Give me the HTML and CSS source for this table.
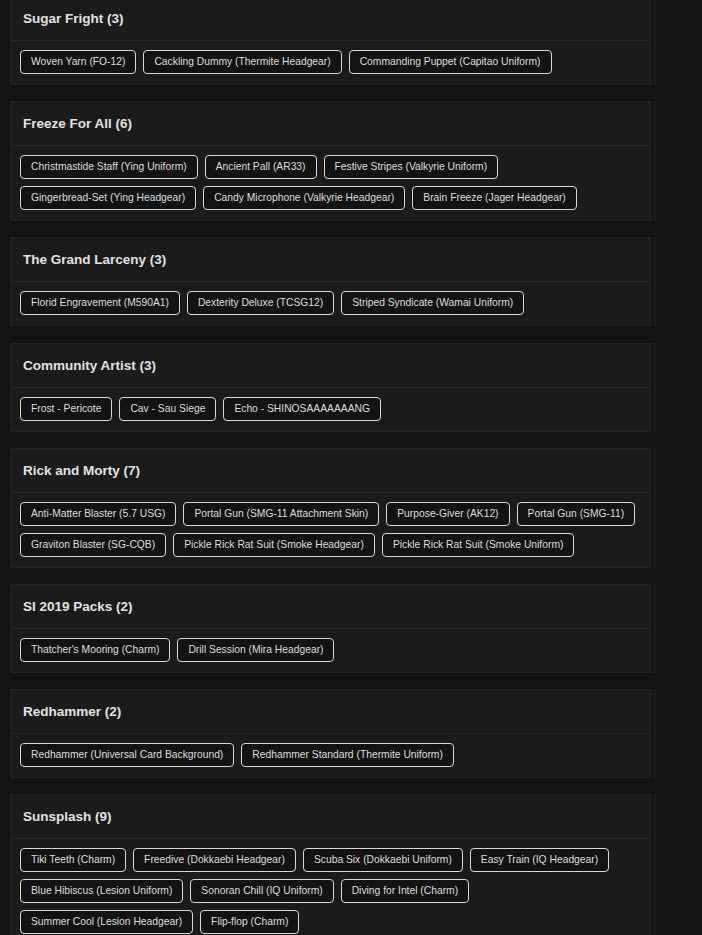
FILE: index.html
```html
<!DOCTYPE html>
<html lang="en">
<head>
    <meta charset="UTF-8">
    <meta name="viewport" content="width=device-width, initial-scale=1.0">
    <title>Bundles</title>
    <link rel="stylesheet" href="styles.css">
</head>
<body>
    <div class="bundles">
        <div class="card">
            <div class="card-header">Sugar Fright (3)</div>
            <div class="card-body">
                <span class="item">Woven Yarn (FO-12)</span>
                <span class="item">Cackling Dummy (Thermite Headgear)</span>
                <span class="item">Commanding Puppet (Capitao Uniform)</span>
            </div>
        </div>
        <div class="card">
            <div class="card-header">Freeze For All (6)</div>
            <div class="card-body">
                <span class="item">Christmastide Staff (Ying Uniform)</span>
                <span class="item">Ancient Pall (AR33)</span>
                <span class="item">Festive Stripes (Valkyrie Uniform)</span>
                <span class="item">Gingerbread-Set (Ying Headgear)</span>
                <span class="item">Candy Microphone (Valkyrie Headgear)</span>
                <span class="item">Brain Freeze (Jager Headgear)</span>
            </div>
        </div>
        <div class="card">
            <div class="card-header">The Grand Larceny (3)</div>
            <div class="card-body">
                <span class="item">Florid Engravement (M590A1)</span>
                <span class="item">Dexterity Deluxe (TCSG12)</span>
                <span class="item">Striped Syndicate (Wamai Uniform)</span>
            </div>
        </div>
        <div class="card">
            <div class="card-header">Community Artist (3)</div>
            <div class="card-body">
                <span class="item">Frost - Pericote</span>
                <span class="item">Cav - Sau Siege</span>
                <span class="item">Echo - SHINOSAAAAAAANG</span>
            </div>
        </div>
        <div class="card">
            <div class="card-header">Rick and Morty (7)</div>
            <div class="card-body">
                <span class="item">Anti-Matter Blaster (5.7 USG)</span>
                <span class="item">Portal Gun (SMG-11 Attachment Skin)</span>
                <span class="item">Purpose-Giver (AK12)</span>
                <span class="item">Portal Gun (SMG-11)</span>
                <span class="item">Graviton Blaster (SG-CQB)</span>
                <span class="item">Pickle Rick Rat Suit (Smoke Headgear)</span>
                <span class="item">Pickle Rick Rat Suit (Smoke Uniform)</span>
            </div>
        </div>
        <div class="card">
            <div class="card-header">SI 2019 Packs (2)</div>
            <div class="card-body">
                <span class="item">Thatcher's Mooring (Charm)</span>
                <span class="item">Drill Session (Mira Headgear)</span>
            </div>
        </div>
        <div class="card">
            <div class="card-header">Redhammer (2)</div>
            <div class="card-body">
                <span class="item">Redhammer (Universal Card Background)</span>
                <span class="item">Redhammer Standard (Thermite Uniform)</span>
            </div>
        </div>
        <div class="card">
            <div class="card-header">Sunsplash (9)</div>
            <div class="card-body">
                <span class="item">Tiki Teeth (Charm)</span>
                <span class="item">Freedive (Dokkaebi Headgear)</span>
                <span class="item">Scuba Six (Dokkaebi Uniform)</span>
                <span class="item">Easy Train (IQ Headgear)</span>
                <span class="item">Blue Hibiscus (Lesion Uniform)</span>
                <span class="item">Sonoran Chill (IQ Uniform)</span>
                <span class="item">Diving for Intel (Charm)</span>
                <span class="item">Summer Cool (Lesion Headgear)</span>
                <span class="item">Flip-flop (Charm)</span>
            </div>
        </div>
    </div>
</body>
</html>
```

FILE: styles.css
```css
*{
    margin:0;
    padding:0;
    box-sizing:border-box;
}
body{
    background:#121212;
    font-family:"Liberation Sans", Arial, sans-serif;
    color:#e4e4e4;
    overflow:hidden;
}
.bundles{
    width:641px;
    margin:-4px 0 0 10px;
    display:flex;
    flex-direction:column;
    gap:16.2px;
}
.card{
    background:#1b1b1b;
    border:1px solid #222;
    box-shadow:3px 0 0 #151515, 5px 0 0 #1b1b1b;
}
.card-header{
    height:44px;
    padding:0 12px;
    display:flex;
    align-items:center;
    font-size:13.5px;
    font-weight:bold;
    color:#e2e2e2;
    border-bottom:1px solid #262626;
}
.card-body{
    padding:9px 9px 10px;
    display:flex;
    flex-wrap:wrap;
    gap:7px;
}
.item{
    height:24px;
    line-height:22px;
    padding:0 10px;
    font-size:10.3px;
    color:#dedede;
    background:#131313;
    border:1px solid #d8d8d8;
    border-radius:4px;
    white-space:nowrap;
}
```
